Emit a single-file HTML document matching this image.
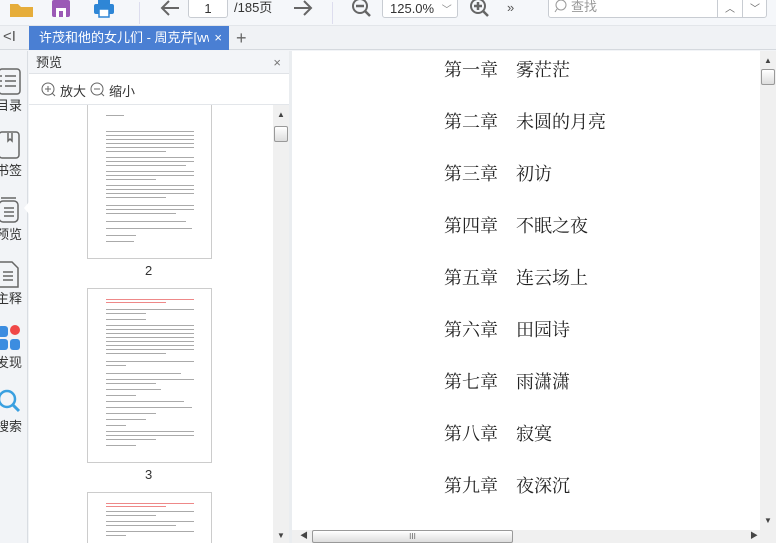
<!DOCTYPE html>
<html><head><meta charset="utf-8">
<style>
*{margin:0;padding:0;box-sizing:border-box}
html,body{width:776px;height:543px;overflow:hidden}
body{background:#f2f4f7;font-family:"Liberation Sans","Noto Sans CJK SC",sans-serif;position:relative;color:#333}
.abs{position:absolute}
.tb{left:0;top:0;width:776px;height:26px;background:#f5f7fa;border-bottom:1px solid #e3e6ea}
.tabbar{left:0;top:26px;width:776px;height:24px;background:#f0f2f5;border-bottom:1px solid #d5d9de}
.tab{left:29px;top:26px;width:200px;height:24px;background:#4a7fd3;color:#fff;font-size:13px;line-height:24px}
.side{left:0;top:51px;width:28px;height:492px;background:#f2f4f7;border-right:1px solid #d9dde2}
.lbl{font-size:13px;color:#333;left:-4px}
.panel{left:29px;top:51px;width:260px;height:492px;background:#fff;border-right:1px solid #d5d9de}
.ph{left:29px;top:51px;width:260px;height:23px;background:#f3f5f8;border-bottom:1px solid #e0e3e7;font-size:13px;line-height:23px;padding-left:7px}
.zr{left:29px;top:74px;width:260px;height:31px;background:#fff;border-bottom:1px solid #e3e6ea;font-size:13px}
.thumbs{left:29px;top:105px;width:244px;height:438px;background:#fff;overflow:hidden}
.pg{left:58px;width:125px;background:#fff;border:1px solid #ccc;overflow:hidden;position:absolute}
.ln{position:absolute;left:18px;height:1px;background:#aaa}
.vs{background:#f0f0f0}
.main{left:292px;top:51px;width:468px;height:479px;background:#fff}
.ch{left:444px;font-family:"Liberation Serif","Noto Serif CJK SC",serif;font-size:18px;line-height:24px;color:#222;white-space:pre}
</style></head><body>
<div class="abs tb"></div>
<svg class="abs" style="left:8px;top:0" width="28" height="18"><path d="M2 4 h8 l3 3 h12 v10 H2z" fill="#e6ad3a"/></svg>
<svg class="abs" style="left:51px;top:0" width="20" height="18"><rect x="1" y="0" width="18" height="17" rx="2" fill="#9b59b6"/><rect x="5" y="8" width="10" height="9" fill="#fff"/><rect x="8" y="11" width="4" height="6" fill="#9b59b6"/></svg>
<svg class="abs" style="left:93px;top:0" width="22" height="18"><rect x="5" y="0" width="12" height="4" fill="#2e86d6"/><rect x="1" y="4" width="20" height="10" rx="2" fill="#2e86d6"/><rect x="6" y="9" width="10" height="8" fill="#fff" stroke="#2e86d6" stroke-width="1.5"/></svg>
<div class="abs" style="left:139px;top:2px;width:1px;height:22px;background:#dde"></div>
<svg class="abs" style="left:159px;top:0" width="22" height="18"><path d="M20 8H3M10 1 3 8l7 7" stroke="#666" stroke-width="2" fill="none"/></svg>
<div class="abs" style="left:188px;top:-4px;width:40px;height:22px;border:1px solid #c8ccd2;border-radius:3px;background:#fff;font-size:13px;text-align:center;line-height:22px;padding-top:1px">1</div>
<div class="abs" style="left:234px;top:0;font-size:13px;line-height:16px">/185页</div>
<svg class="abs" style="left:292px;top:0" width="22" height="18"><path d="M2 8h17M12 1l7 7-7 7" stroke="#666" stroke-width="2" fill="none"/></svg>
<div class="abs" style="left:332px;top:2px;width:1px;height:22px;background:#dde"></div>
<svg class="abs" style="left:351px;top:0" width="22" height="20"><circle cx="9" cy="6" r="7" stroke="#666" stroke-width="2" fill="none"/><path d="M5 6h8M14 11l5 5" stroke="#666" stroke-width="2.5"/></svg>
<div class="abs" style="left:382px;top:-4px;width:76px;height:22px;border:1px solid #c8ccd2;border-radius:3px;background:#fff;font-size:13px;line-height:24px;padding-left:7px">125.0% <span style="color:#888;font-size:10px;margin-left:4px">﹀</span></div>
<svg class="abs" style="left:469px;top:0" width="22" height="20"><circle cx="9" cy="6" r="7" stroke="#666" stroke-width="2" fill="none"/><path d="M5 6h8M9 2v8M14 11l5 5" stroke="#666" stroke-width="2.5"/></svg>
<div class="abs" style="left:507px;top:0;font-size:13px;color:#555">»</div>
<div class="abs" style="left:548px;top:-4px;width:219px;height:22px;border:1px solid #c8ccd2;border-radius:3px;background:#fff"></div>
<svg class="abs" style="left:554px;top:0" width="14" height="14"><circle cx="7" cy="5" r="5" stroke="#999" fill="none"/><path d="M3 9 1 12" stroke="#999"/></svg>
<div class="abs" style="left:571px;top:0;font-size:13px;color:#999;line-height:14px">查找</div>
<div class="abs" style="left:717px;top:-4px;width:1px;height:22px;background:#c8ccd2"></div>
<div class="abs" style="left:742px;top:-4px;width:1px;height:22px;background:#c8ccd2"></div>
<div class="abs" style="left:725px;top:0;font-size:10px;color:#666">︿</div>
<div class="abs" style="left:750px;top:0;font-size:10px;color:#666">﹀</div>

<div class="abs tabbar"></div>
<div class="abs" style="left:3px;top:28px;font-size:15px;color:#555">&lt;I</div>
<div class="abs tab"><div style="position:absolute;left:10px;width:170px;overflow:hidden;white-space:nowrap">许茂和他的女儿们 - 周克芹[www</div><span style="position:absolute;right:7px">×</span></div>
<div class="abs" style="left:236px;top:27px;font-size:18px;color:#666;line-height:22px">+</div>

<div class="abs side"></div>
<svg class="abs" style="left:-2px;top:68px" width="24" height="28"><rect x="1" y="1" width="21" height="25" rx="3" stroke="#666" fill="none" stroke-width="1.5"/><path d="M2 8h2M7 8h11M2 13h2M7 13h11M2 18h2M7 18h11" stroke="#666" stroke-width="1.5"/></svg>
<div class="abs lbl" style="top:95px">目录</div>
<svg class="abs" style="left:-2px;top:131px" width="24" height="30"><rect x="1" y="1" width="20" height="26" rx="3" stroke="#666" fill="none" stroke-width="1.5"/><path d="M10 2v8l2-2 2 2V2" stroke="#666" stroke-width="1.5" fill="none"/></svg>
<div class="abs lbl" style="top:160px">书签</div>
<svg class="abs" style="left:-2px;top:197px" width="24" height="28"><rect x="1" y="4" width="19" height="21" rx="4" stroke="#666" fill="none" stroke-width="1.5"/><path d="M3 1h15M6 11h10M6 15h10M6 19h10" stroke="#666" stroke-width="1.5"/></svg>
<div class="abs lbl" style="top:224px">预览</div>
<div class="abs" style="left:24px;top:202px;width:0;height:0;border-top:6px solid transparent;border-bottom:6px solid transparent;border-right:5px solid #fff"></div>
<svg class="abs" style="left:-2px;top:261px" width="24" height="28"><path d="M1 1h13l6 6v19H1z" stroke="#666" fill="none" stroke-width="1.5"/><path d="M5 11h10M5 15h10M5 19h10" stroke="#666" stroke-width="1.5"/></svg>
<div class="abs lbl" style="top:288px">主释</div>
<svg class="abs" style="left:-2px;top:324px" width="24" height="28"><rect x="0" y="2" width="10" height="11" rx="3" fill="#3c8de0"/><circle cx="17" cy="6" r="5" fill="#f04848"/><rect x="0" y="15" width="10" height="11" rx="3" fill="#3c8de0"/><rect x="12" y="15" width="10" height="11" rx="3" fill="#3c8de0"/></svg>
<div class="abs lbl" style="top:352px">发现</div>
<svg class="abs" style="left:-2px;top:389px" width="24" height="28"><circle cx="9" cy="10" r="8" stroke="#3aa0e0" stroke-width="2.5" fill="none"/><path d="M15 16l6 6" stroke="#3aa0e0" stroke-width="3"/></svg>
<div class="abs lbl" style="top:416px">搜索</div>

<div class="abs panel"></div>
<div class="abs thumbs">
<div class="pg" style="top:-5px;height:159px">
<div class="ln" style="top:14px;width:18px"></div>
<div class="ln" style="top:30px;width:88px"></div><div class="ln" style="top:34px;width:88px"></div><div class="ln" style="top:38px;width:88px"></div><div class="ln" style="top:42px;width:88px"></div><div class="ln" style="top:46px;width:88px"></div><div class="ln" style="top:50px;width:60px"></div>
<div class="ln" style="top:56px;width:88px"></div><div class="ln" style="top:60px;width:88px"></div><div class="ln" style="top:64px;width:80px"></div>
<div class="ln" style="top:70px;width:88px"></div><div class="ln" style="top:74px;width:88px"></div><div class="ln" style="top:78px;width:50px"></div>
<div class="ln" style="top:84px;width:88px"></div><div class="ln" style="top:88px;width:88px"></div><div class="ln" style="top:92px;width:88px"></div><div class="ln" style="top:96px;width:60px"></div>
<div class="ln" style="top:104px;width:88px"></div><div class="ln" style="top:108px;width:88px"></div><div class="ln" style="top:112px;width:70px"></div>
<div class="ln" style="top:120px;width:80px"></div><div class="ln" style="top:127px;width:86px"></div><div class="ln" style="top:134px;width:30px"></div><div class="ln" style="top:140px;width:28px"></div>
</div>
<div class="abs" style="left:116px;top:158px;font-size:13px">2</div>
<div class="pg" style="top:183px;height:175px">
<div class="ln" style="top:10px;width:88px;background:#e88"></div><div class="ln" style="top:13px;width:60px;background:#e88"></div>
<div class="ln" style="top:20px;width:88px"></div><div class="ln" style="top:24px;width:40px"></div>
<div class="ln" style="top:30px;width:40px"></div>
<div class="ln" style="top:36px;width:88px"></div><div class="ln" style="top:40px;width:88px"></div><div class="ln" style="top:44px;width:88px"></div><div class="ln" style="top:48px;width:88px"></div><div class="ln" style="top:52px;width:88px"></div><div class="ln" style="top:56px;width:88px"></div><div class="ln" style="top:60px;width:88px"></div><div class="ln" style="top:64px;width:60px"></div>
<div class="ln" style="top:72px;width:88px"></div><div class="ln" style="top:76px;width:20px"></div>
<div class="ln" style="top:84px;width:75px"></div>
<div class="ln" style="top:90px;width:88px"></div><div class="ln" style="top:94px;width:50px"></div>
<div class="ln" style="top:100px;width:55px"></div><div class="ln" style="top:106px;width:30px"></div><div class="ln" style="top:112px;width:78px"></div><div class="ln" style="top:118px;width:86px"></div><div class="ln" style="top:124px;width:50px"></div><div class="ln" style="top:130px;width:40px"></div><div class="ln" style="top:136px;width:20px"></div>
<div class="ln" style="top:142px;width:88px"></div><div class="ln" style="top:146px;width:88px"></div><div class="ln" style="top:150px;width:50px"></div><div class="ln" style="top:156px;width:30px"></div>
</div>
<div class="abs" style="left:116px;top:362px;font-size:13px">3</div>
<div class="pg" style="top:387px;height:51px;border-bottom:none">
<div class="ln" style="top:10px;width:88px;background:#e88"></div><div class="ln" style="top:13px;width:60px;background:#e88"></div>
<div class="ln" style="top:18px;width:88px"></div><div class="ln" style="top:22px;width:50px"></div>
<div class="ln" style="top:28px;width:88px"></div><div class="ln" style="top:32px;width:70px"></div>
<div class="ln" style="top:38px;width:88px"></div><div class="ln" style="top:42px;width:20px"></div>
</div>
</div>
<div class="abs ph">预览<span style="position:absolute;right:8px;color:#777">×</span></div>
<div class="abs zr">
<svg class="abs" style="left:12px;top:8px" width="15" height="15"><circle cx="7" cy="7" r="6" stroke="#666" fill="none"/><path d="M4 7h6M7 4v6M11 11l3 3" stroke="#666"/></svg>
<span class="abs" style="left:31px;top:7px">放大</span>
<svg class="abs" style="left:61px;top:8px" width="15" height="15"><circle cx="7" cy="7" r="6" stroke="#666" fill="none"/><path d="M4 7h6M11 11l3 3" stroke="#666"/></svg>
<span class="abs" style="left:80px;top:7px">缩小</span>
</div>
<div class="abs vs" style="left:273px;top:105px;width:16px;height:438px"></div>
<div class="abs" style="left:277px;top:110px;font-size:8px;color:#444;line-height:10px">▲</div>
<div class="abs" style="left:274px;top:126px;width:14px;height:16px;border:1px solid #999;border-radius:2px;background:linear-gradient(#fff,#ddd)"></div>
<div class="abs" style="left:277px;top:531px;font-size:8px;color:#444;line-height:10px">▼</div>

<div class="abs" style="left:289px;top:51px;width:3px;height:492px;background:#eaedf0"></div>
<div class="abs main"></div>
<div class="abs ch" style="top:58px">第一章    雾茫茫</div>
<div class="abs ch" style="top:110px">第二章    未圆的月亮</div>
<div class="abs ch" style="top:162px">第三章    初访</div>
<div class="abs ch" style="top:214px">第四章    不眠之夜</div>
<div class="abs ch" style="top:266px">第五章    连云场上</div>
<div class="abs ch" style="top:318px">第六章    田园诗</div>
<div class="abs ch" style="top:370px">第七章    雨潇潇</div>
<div class="abs ch" style="top:422px">第八章    寂寞</div>
<div class="abs ch" style="top:474px">第九章    夜深沉</div>
<div class="abs vs" style="left:760px;top:51px;width:16px;height:479px"></div>
<div class="abs" style="left:764px;top:56px;font-size:8px;color:#444;line-height:10px">▲</div>
<div class="abs" style="left:761px;top:69px;width:14px;height:16px;border:1px solid #999;border-radius:2px;background:linear-gradient(#fff,#ddd)"></div>
<div class="abs" style="left:764px;top:516px;font-size:8px;color:#444;line-height:10px">▼</div>
<div class="abs vs" style="left:292px;top:530px;width:484px;height:13px"></div>
<div class="abs" style="left:300px;top:531px;font-size:8px;color:#444;line-height:10px">◀</div>
<div class="abs" style="left:312px;top:530px;width:201px;height:13px;border:1px solid #999;border-radius:2px;background:linear-gradient(#fff,#ddd);font-size:8px;text-align:center;color:#666;line-height:11px">III</div>
<div class="abs" style="left:750px;top:531px;font-size:8px;color:#444;line-height:10px">▶</div>
</body></html>
